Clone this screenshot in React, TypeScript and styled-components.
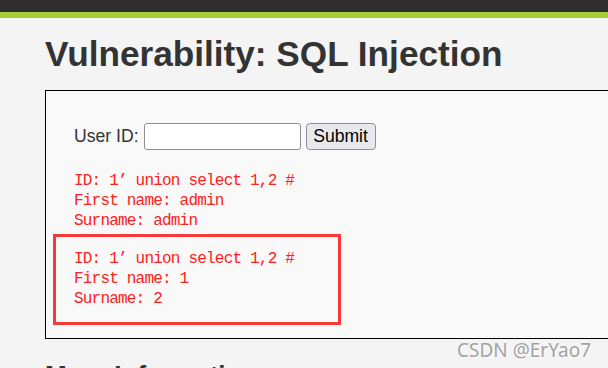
import styled, { createGlobalStyle } from 'styled-components'

const GlobalStyle = createGlobalStyle`
  html, body {
    margin: 0;
    padding: 0;
    background: #f4f4f4;
    overflow: hidden;
  }
  body {
    font-family: 'Liberation Sans', Arial, sans-serif;
    color: #333;
  }
`

const Page = styled.div`
  position: relative;
  width: 608px;
  height: 368px;
  overflow: hidden;
`

const TopBar = styled.div`
  height: 12px;
  background: #2e2e2e;
  border-bottom: 6px solid #a5cd37;
`

const Main = styled.div`
  padding-left: 45px;
`

const Title = styled.h1`
  margin: 16px 0 16px;
  font-size: 35.2px;
  line-height: 40.4px;
  font-weight: bold;
  color: #333;
  white-space: nowrap;
`

const CodeArea = styled.div`
  width: 620px;
  background: #f8f9f8;
  border: 1px solid #000;
  padding: 32px 0 13px 7px;
`

const FormRow = styled.form`
  display: flex;
  align-items: center;
  margin-left: 21px;
  font-size: 17.6px;
  color: #333;
`

const Input = styled.input`
  box-sizing: border-box;
  width: 157px;
  height: 27px;
  margin-left: 5px;
  border: 1px solid #8f8f9d;
  border-radius: 3px;
  background: #fff;
`

const SubmitButton = styled.button`
  box-sizing: border-box;
  width: 70px;
  height: 27px;
  margin-left: 5px;
  padding: 0;
  border: 1px solid #8f8f9d;
  border-radius: 4px;
  background: #e9e9ed;
  color: #000;
  font-family: 'Liberation Sans', Arial, sans-serif;
  font-size: 17.6px;
`

const Result = styled.pre<{ $offset?: number }>`
  margin: 0 0 0 ${({ $offset }) => $offset ?? 0}px;
  font-family: 'Liberation Mono', 'Noto Sans CJK SC', monospace;
  font-size: 16px;
  letter-spacing: -0.8px;
  line-height: 20px;
  color: #ff2020;
`

const FirstResult = styled(Result)`
  margin-top: 21px;
`

const Highlight = styled.div`
  width: 264px;
  margin-top: 3px;
  border: 3px solid #f53a3a;
  padding: 12px 0 13px 18px;
`

const SubTitle = styled.h2`
  margin: 21px 0 0;
  font-size: 26px;
  line-height: 30px;
  font-weight: bold;
  color: #333;
`

const Watermark = styled.div`
  position: absolute;
  left: 457px;
  top: 337px;
  font-family: 'Noto Sans', 'Open Sans', sans-serif;
  font-size: 19px;
  color: #a3a3a3;
  text-shadow: 1px 1px 0 rgba(255, 255, 255, 0.8);
  white-space: nowrap;
`

const rows = [
  { id: "1’ union select 1,2 #", first: 'admin', surname: 'admin' },
  { id: "1’ union select 1,2 #", first: '1', surname: '2' },
]

const App = () => {
  return (
    <Page>
      <GlobalStyle />
      <TopBar />
      <Main>
        <Title>Vulnerability: SQL Injection</Title>
        <CodeArea>
          <FormRow onSubmit={(e) => e.preventDefault()}>
            User ID:
            <Input type="text" name="id" />
            <SubmitButton type="submit">Submit</SubmitButton>
          </FormRow>
          <FirstResult $offset={21}>
            {`ID: ${rows[0].id}\nFirst name: ${rows[0].first}\nSurname: ${rows[0].surname}`}
          </FirstResult>
          <Highlight>
            <Result>{`ID: ${rows[1].id}\nFirst name: ${rows[1].first}\nSurname: ${rows[1].surname}`}</Result>
          </Highlight>
        </CodeArea>
        <SubTitle>More Information</SubTitle>
      </Main>
      <Watermark>CSDN @ErYao7</Watermark>
    </Page>
  )
}

export default App
